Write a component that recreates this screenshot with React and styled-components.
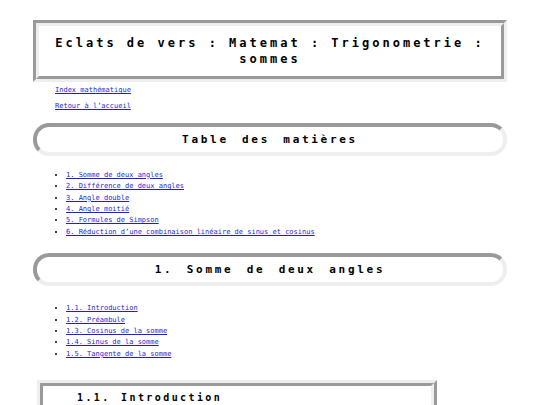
import React from "react";
import styled, { createGlobalStyle } from "styled-components";

const GlobalStyle = createGlobalStyle`
  body {
    margin: 0;
    background: #ffffff;
    font-family: "DejaVu Sans Mono", monospace;
  }
`;

const toc = [
  "1. Somme de deux angles",
  "2. Différence de deux angles",
  "3. Angle double",
  "4. Angle moitié",
  "5. Formules de Simpson",
  "6. Réduction d’une combinaison linéaire de sinus et cosinus",
];

const sommeToc = [
  "1.1. Introduction",
  "1.2. Préambule",
  "1.3. Cosinus de la somme",
  "1.4. Sinus de la somme",
  "1.5. Tangente de la somme",
];

const App = () => {
  return (
    <Page>
      <GlobalStyle />
      <Title>Eclats de vers : Matemat : Trigonometrie : sommes</Title>

      <Nav>
        <NavItem>
          <Link href="#">Index mathématique</Link>
        </NavItem>
        <NavItem>
          <Link href="#">Retour à l’accueil</Link>
        </NavItem>
      </Nav>

      <SectionHeading>Table des matières</SectionHeading>
      <List $top={14}>
        {toc.map((t) => (
          <li key={t}>
            <Link href="#">{t}</Link>
          </li>
        ))}
      </List>

      <SectionHeading>1. Somme de deux angles</SectionHeading>
      <List $top={17}>
        {sommeToc.map((t) => (
          <li key={t}>
            <Link href="#">{t}</Link>
          </li>
        ))}
      </List>

      <SubHeading>1.1. Introduction</SubHeading>
    </Page>
  );
};

const Page = styled.div`
  padding: 20px 33px 0;
`;

const Title = styled.h1`
  margin: 0;
  padding: 9px 16px;
  border: 6px groove #eeeeee;
  text-align: center;
  font-size: 12px;
  line-height: 16px;
  font-weight: bold;
  letter-spacing: 3px;
  color: #000;
`;

const Nav = styled.div`
  margin: 4px 0 13px 22px;
  display: flex;
  flex-direction: column;
  gap: 7.8px;
`;

const NavItem = styled.p`
  margin: 0;
  font-size: 7px;
  line-height: 8px;
`;

const Link = styled.a`
  color: #1f1fd8;
  text-decoration: underline;
`;

const SectionHeading = styled.h2`
  margin: 0;
  height: 25px;
  border: 4px inset #eeeeee;
  border-radius: 16px;
  text-align: center;
  font-size: 11px;
  line-height: 26px;
  font-weight: bold;
  letter-spacing: 2.7px;
  word-spacing: 4px;
  color: #000;
`;

const List = styled.ul`
  margin: ${(p) => p.$top}px 0 15px;
  padding-left: 33px;
  font-size: 7px;
  line-height: 11.4px;

  li::marker {
    color: #000;
  }
`;

const SubHeading = styled.h3`
  margin: 20px 0 0 4px;
  padding: 6px 0 5px 34px;
  border: 6px ridge #eeeeee;
  box-sizing: border-box;
  width: 400px;
  font-size: 10px;
  line-height: 12px;
  font-weight: bold;
  letter-spacing: 2.4px;
  word-spacing: 2px;
  color: #000;
`;

export default App;
